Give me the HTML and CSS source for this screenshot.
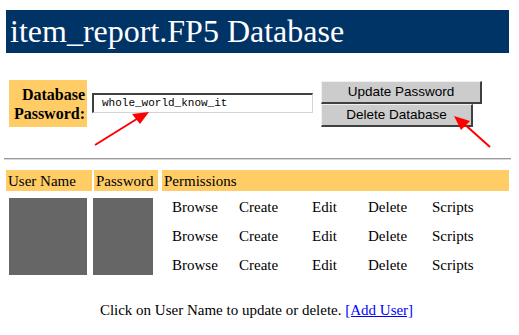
FILE: index.html
```html
<!DOCTYPE html>
<html lang="en">
<head>
    <meta charset="UTF-8">
    <title>item_report.FP5 Database</title>
    <link rel="stylesheet" href="styles.css">
</head>
<body>
    <div class="page">
        <p class="title-bar">item_report.FP5 Database</p>

        <div class="password-row">
            <p class="pw-label">Database<br>Password:</p>
            <div class="pw-input">whole_world_know_it</div>
            <div class="pw-buttons">
                <div class="btn btn-update">Update Password</div>
                <div class="btn btn-delete">Delete Database</div>
            </div>
        </div>

        <div class="divider"></div>

        <div class="users">
            <div class="users-head">
                <p class="col-name">User Name</p>
                <p class="col-pass">Password</p>
                <p class="col-perm">Permissions</p>
            </div>
            <div class="users-body">
                <div class="blank blank-name"></div>
                <div class="blank blank-pass"></div>
                <div class="perms">
                    <p>Browse</p><p>Create</p><p>Edit</p><p>Delete</p><p>Scripts</p>
                    <p>Browse</p><p>Create</p><p>Edit</p><p>Delete</p><p>Scripts</p>
                    <p>Browse</p><p>Create</p><p>Edit</p><p>Delete</p><p>Scripts</p>
                </div>
            </div>
        </div>

        <p class="footer">Click on User Name to update or delete. <a href="#">[Add User]</a></p>

        <svg class="arrows" width="519" height="335" viewBox="0 0 519 335">
            <line x1="95" y1="145" x2="140" y2="117" stroke="#ff0000" stroke-width="2"/>
            <polygon points="149,112 132,114 140,124" fill="#ff0000"/>
            <line x1="490" y1="147" x2="462" y2="122" stroke="#ff0000" stroke-width="2"/>
            <polygon points="454,116 470,121 461,130" fill="#ff0000"/>
        </svg>
    </div>
</body>
</html>
```

FILE: styles.css
```css
body {
    margin: 0;
    background: #fff;
}
p {
    margin: 0;
    font-family: "Liberation Serif";
}
.page {
    position: relative;
    width: 519px;
    height: 335px;
    padding: 10px 10px 0 6px;
    box-sizing: border-box;
    color: #000;
}
.title-bar {
    background: #003366;
    color: #fff;
    height: 43px;
    line-height: 42px;
    font-size: 32px;
    font-family: "Liberation Serif";
    padding-left: 4px;
}
.password-row {
    display: flex;
    align-items: flex-start;
    margin-top: 27px;
    margin-left: 3px;
}
.pw-label {
    background: #ffcc66;
    width: 78px;
    height: 47px;
    box-sizing: border-box;
    font-size: 16px;
    font-weight: bold;
    line-height: 19px;
    text-align: right;
    padding: 5px 2px 0 0;
}
.pw-input {
    margin: 13px 0 0 5px;
    width: 221px;
    height: 20px;
    box-sizing: border-box;
    border-top: 2px solid #404040;
    border-left: 2px solid #404040;
    border-right: 1px solid #d4d4d4;
    border-bottom: 1px solid #d4d4d4;
    font-family: "Liberation Mono";
    font-size: 11px;
    line-height: 17px;
    padding-left: 8px;
}
.pw-buttons {
    display: flex;
    flex-direction: column;
    align-items: flex-start;
    margin: 1px 0 0 8px;
}
.btn {
    background: #cccccc;
    box-sizing: border-box;
    border-top: 1px solid #f0f0f0;
    border-left: 1px solid #f0f0f0;
    border-right: 2px solid #404040;
    border-bottom: 2px solid #404040;
    font-family: "Liberation Sans";
    font-size: 13.5px;
    line-height: 20px;
    text-align: center;
    height: 23px;
}
.btn-update {
    width: 161px;
}
.btn-delete {
    width: 152px;
}
.arrows {
    position: absolute;
    left: 0;
    top: 0;
    pointer-events: none;
}
.divider {
    margin: 31px 0 0 -2px;
    width: 507px;
    border-top: 1px solid #9a9a9a;
    border-bottom: 1px solid #d8d8d8;
}
.users {
    margin-top: 10px;
}
.users-head {
    display: flex;
    height: 21px;
}
.users-head p {
    background: #ffcc66;
    font-size: 15px;
    line-height: 22px;
    padding-left: 2px;
    box-sizing: border-box;
}
.col-name {
    width: 86px;
}
.col-pass {
    width: 64px;
    margin-left: 2px !important;
}
.col-perm {
    flex: 1;
    margin-left: 4px !important;
}
.users-body {
    display: flex;
    margin-top: 7px;
}
.blank {
    background: #666666;
    height: 77px;
}
.blank-name {
    width: 78px;
    margin-left: 3px;
}
.blank-pass {
    width: 60px;
    margin-left: 6px;
}
.perms {
    display: grid;
    grid-template-columns: 67px 73px 56px 64px 60px;
    grid-auto-rows: 29px;
    margin: -5px 0 0 19px;
}
.perms p {
    font-size: 15px;
    line-height: 29px;
}
.footer {
    text-align: center;
    font-size: 15px;
    line-height: 18px;
    margin-top: 21px;
    padding-right: 2px;
}
.footer a {
    color: #0000ff;
}
```
